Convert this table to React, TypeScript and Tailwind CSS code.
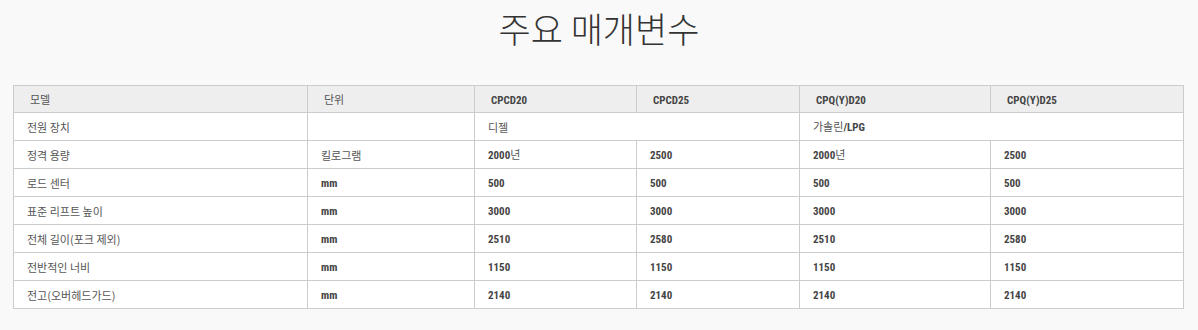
import React from "react";

function Txt({ text }: { text: string }) {
  const parts = text.split(/([A-Za-z0-9/()]+)/).filter((p) => p !== "");
  return (
    <>
      {parts.map((p, i) =>
        /[A-Za-z0-9]/.test(p) ? (
          <span
            key={i}
            className="font-['Roboto_Condensed','Liberation_Sans',sans-serif] font-bold text-[11px] leading-[13px] text-[#444]"
          >
            {p}
          </span>
        ) : (
          <span key={i} className="font-['Noto_Sans_CJK_KR',sans-serif] text-[11px] leading-[13px] text-[#555]">
            {p}
          </span>
        )
      )}
    </>
  );
}

type Cell = { t: string; span?: number };

const rows: Cell[][] = [
  [{ t: "전원 장치" }, { t: "" }, { t: "디젤", span: 2 }, { t: "가솔린/LPG", span: 2 }],
  [{ t: "정격 용량" }, { t: "킬로그램" }, { t: "2000년" }, { t: "2500" }, { t: "2000년" }, { t: "2500" }],
  [{ t: "로드 센터" }, { t: "mm" }, { t: "500" }, { t: "500" }, { t: "500" }, { t: "500" }],
  [{ t: "표준 리프트 높이" }, { t: "mm" }, { t: "3000" }, { t: "3000" }, { t: "3000" }, { t: "3000" }],
  [{ t: "전체 길이(포크 제외)" }, { t: "mm" }, { t: "2510" }, { t: "2580" }, { t: "2510" }, { t: "2580" }],
  [{ t: "전반적인 너비" }, { t: "mm" }, { t: "1150" }, { t: "1150" }, { t: "1150" }, { t: "1150" }],
  [{ t: "전고(오버헤드가드)" }, { t: "mm" }, { t: "2140" }, { t: "2140" }, { t: "2140" }, { t: "2140" }],
];

const headers = ["모델", "단위", "CPCD20", "CPCD25", "CPQ(Y)D20", "CPQ(Y)D25"];

export default function App() {
  return (
    <div className="bg-[#f9f9f9] min-h-[330px] w-[1198px]">
      <h1 className="pt-[11px] text-center text-[35px] leading-[34px] font-light text-[#333] font-['Noto_Sans_CJK_KR',sans-serif]">
        주요 매개변수
      </h1>
      <div className="mt-[40px] ml-[13px]">
        <table className="table-fixed border-collapse w-[1170px] bg-white">
          <colgroup>
            <col className="w-[294px]" />
            <col className="w-[167px]" />
            <col className="w-[162px]" />
            <col className="w-[163px]" />
            <col className="w-[191px]" />
            <col className="w-[193px]" />
          </colgroup>
          <thead>
            <tr className="h-[27px] bg-[#eeeeee]">
              {headers.map((h, i) => (
                <th key={i} className="border border-[#cccccc] py-0 pr-0 pl-[16px] text-left font-normal align-middle leading-[13px]">
                  <Txt text={h} />
                </th>
              ))}
            </tr>
          </thead>
          <tbody>
            {rows.map((r, ri) => (
              <tr key={ri} className="h-[28px]">
                {r.map((c, ci) => (
                  <td
                    key={ci}
                    colSpan={c.span}
                    className="border border-[#cccccc] py-0 pr-0 pl-[13px] text-left align-middle leading-[13px]"
                  >
                    <Txt text={c.t} />
                  </td>
                ))}
              </tr>
            ))}
          </tbody>
        </table>
      </div>
    </div>
  );
}
